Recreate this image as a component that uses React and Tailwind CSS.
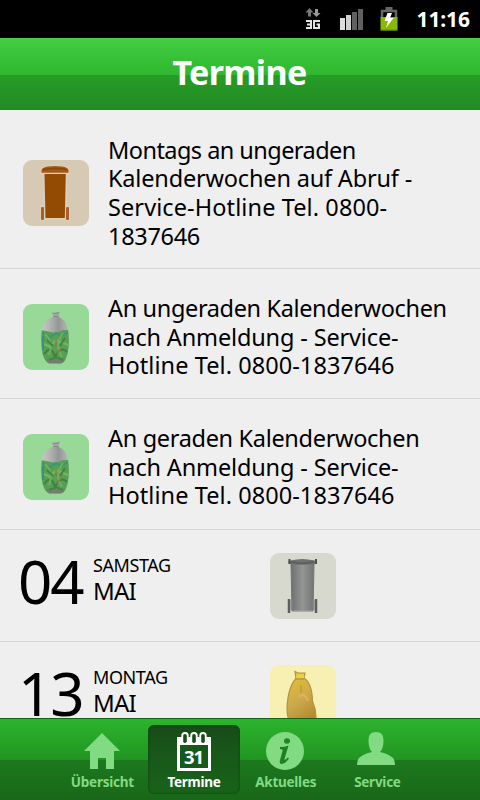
import React from "react";

const notices = [
  {
    bin: "brown",
    size: "h-[159px] pt-2",
    lines: [
      { text: "Montags an ungeraden", spacing: "tracking-[-0.55px]" },
      { text: "Kalenderwochen auf Abruf -", spacing: "tracking-[-0.18px]" },
      { text: "Service-Hotline Tel. 0800-", spacing: "tracking-[0.1px]" },
      { text: "1837646", spacing: "tracking-[-0.3px]" },
    ],
  },
  {
    bin: "glass",
    size: "h-[130px] pt-[7px]",
    lines: [
      { text: "An ungeraden Kalenderwochen", spacing: "tracking-[-0.36px]" },
      { text: "nach Anmeldung - Service-", spacing: "tracking-[-0.15px]" },
      { text: "Hotline Tel. 0800-1837646", spacing: "tracking-[0.07px]" },
    ],
  },
  {
    bin: "glass",
    size: "h-[131px] pt-1.5",
    lines: [
      { text: "An geraden Kalenderwochen", spacing: "tracking-[-0.32px]" },
      { text: "nach Anmeldung - Service-", spacing: "tracking-[-0.15px]" },
      { text: "Hotline Tel. 0800-1837646", spacing: "tracking-[0.07px]" },
    ],
  },
];

const dates = [
  { day: "04", weekday: "SAMSTAG", month: "MAI", bin: "grey" },
  { day: "13", weekday: "MONTAG", month: "MAI", bin: "yellow" },
];

const BrownBin = () => (
  <svg viewBox="0 0 66 66" className="h-full w-full">
    <path
      d="M18 8Q32 3 46 8V14L43.500 15V46H46.500V60.500H43V59H21V60.500H17.500V46H21V15L18 14Z"
      fill="#e0cfb6"
      stroke="#e0cfb6"
      strokeWidth="1"
    />
    <path d="M18.500 10Q19 7.500 25 6.500Q32 5.500 39 6.500Q45 7.500 45.500 10V12.800H18.500Z" fill="#a1581c" />
    <path d="M20 9.500Q32 7.500 44 9.500" stroke="#8c4504" strokeWidth="1.500" fill="none" />
    <path d="M21.500 14H42.800L41.800 58H22.500Z" fill="#934a03" />
    <rect x="18" y="47" width="3" height="13" rx="1" fill="#a4622a" />
    <rect x="43" y="47" width="3" height="13" rx="1" fill="#a4622a" />
  </svg>
);

const GreyBin = () => (
  <svg viewBox="0 0 66 66" className="h-full w-full">
    <defs>
      <linearGradient id="greyBody" x1="0" x2="1" y1="0" y2="0">
        <stop offset="0" stopColor="#6e706f" />
        <stop offset=".5" stopColor="#949695" />
        <stop offset="1" stopColor="#737574" />
      </linearGradient>
    </defs>
    <path d="M21 11H44L43 58H22Z" fill="url(#greyBody)" stroke="#737574" />
    <path d="M23 58H42.500" stroke="#b0b1ac" strokeWidth="1" />
    <path d="M18.500 7.500H21Q32 4.500 44 7.500H46.500V11H18.500Z" fill="#707271" />
    <path d="M21 8.500Q32 12.500 44 8.500" stroke="#5d5f5e" strokeWidth="2" fill="none" />
    <path d="M19.500 6V11M46 6V11" stroke="#4d4f4e" strokeWidth="2" />
    <path d="M19 46V60M46 46V60" stroke="#5d5f5e" strokeWidth="2.500" />
    <path d="M21.500 47V57M43.500 47V57" stroke="#858786" strokeWidth="2" />
  </svg>
);

const GlassBag = () => (
  <svg viewBox="0 0 66 66" className="h-full w-full">
    <defs>
      <linearGradient id="bagTop" x1="0" x2="1" y1="0" y2="0">
        <stop offset="0" stopColor="#c8cdc8" />
        <stop offset=".3" stopColor="#b2b6b3" />
        <stop offset=".6" stopColor="#939695" />
        <stop offset="1" stopColor="#c0c5c0" />
      </linearGradient>
      <clipPath id="bagClip">
        <path d="M29 13H36Q43 16 45 25Q47 40 44.500 50Q42 59 38 59.500H26Q22 58 19.500 50Q17 37 19 25Q21 16 29 13Z" />
      </clipPath>
      <filter id="bagSoft">
        <feGaussianBlur stdDeviation=".6" />
      </filter>
    </defs>
    <path d="M28.500 8L31 9L37 7.500L35.500 12V14H30V11.500Z" fill="#a0a6a1" />
    <path d="M30 9.500L36 8.800M30.500 12.500H35.500" stroke="#838985" strokeWidth="1" />
    <g clipPath="url(#bagClip)">
      <path d="M17 12H48V62H17Z" fill="url(#bagTop)" />
      <g filter="url(#bagSoft)">
        <path d="M14 25L23 27L33 29L40 26L50 26V56H14Z" fill="#57a055" />
        <path d="M14 55H50V64H14Z" fill="#71816d" />
        <g fill="none" strokeWidth="2">
          <path d="M19 29L27 33L33 29L38 32L45 28" stroke="#3b9770" />
          <path d="M19 39L27 43L33 36L45 41" stroke="#7eb35d" />
          <path d="M21 50Q28 40 32 53Q38 41 44 48" stroke="#3f8140" />
          <path d="M22 30Q31 38 26 51M40 29Q31 41 39 53" stroke="#71af60" />
          <path d="M20 32V46" stroke="#3b9278" />
          <path d="M24 36L30 42M42 34L37 42" stroke="#3d8741" />
          <path d="M33 35V43M38 44L34 50" stroke="#8c7b4c" strokeWidth="1.500" />
          <path d="M26 56L33 53L40 56" stroke="#4a8247" />
        </g>
      </g>
    </g>
  </svg>
);

const YellowBag = () => (
  <svg viewBox="0 0 66 66" className="h-full w-full">
    <defs>
      <linearGradient id="sack" x1="0" x2=".35" y1="0" y2="1">
        <stop offset="0" stopColor="#e3c642" />
        <stop offset=".4" stopColor="#d7b243" />
        <stop offset=".6" stopColor="#cda84e" />
        <stop offset="1" stopColor="#b58b2d" />
      </linearGradient>
    </defs>
    <path
      d="M25 6.500L28 8H35L34 13Q42 18 42.500 36Q46 44 46 52Q44 63 35 62H25Q17 59 17 43Q18 22 26 13.500Z"
      fill="url(#sack)"
      stroke="#ae963d"
      strokeWidth="1.200"
    />
    <path d="M27 9H34V13H26Z" fill="#ead047" />
    <path d="M26 14H34M31 20V28" stroke="#b89930" strokeWidth="1.300" />
    <path d="M29 32Q34 26 38 36" stroke="#dfbd66" strokeWidth="3" fill="none" opacity=".5" />
  </svg>
);

const tiles = {
  brown: { icon: BrownBin, background: "bg-[#d6cab4]" },
  grey: { icon: GreyBin, background: "bg-[#d7d8ce]" },
  glass: { icon: GlassBag, background: "bg-[#99d998]" },
  yellow: { icon: YellowBag, background: "bg-[#f8efb3]" },
};

const BinTile = ({ type }) => {
  const { icon: Icon, background } = tiles[type];
  return (
    <div className={`h-[66px] w-[66px] shrink-0 overflow-hidden rounded-[9px] ${background}`}>
      <Icon />
    </div>
  );
};

const StatusBar = () => (
  <div className="flex h-[38px] shrink-0 items-center bg-black pl-[304px] text-white">
    <svg width="18" height="24" viewBox="0 0 18 24" className="shrink-0">
      <path d="M5.500 1L9.500 5.500H7V9.500H4V5.500H1.500Z" fill="#777" />
      <path d="M11 2H14V6H16.500L12.500 10L8.500 6H11Z" fill="#999" />
      <path
        d="M2 14H7V21H2M3 17.500H7M16 14H10V21H15V17.500H12.500"
        fill="none"
        stroke="#e4e4e4"
        strokeWidth="2"
      />
    </svg>
    <svg width="24" height="22" viewBox="0 0 24 22" className="ml-[17px] shrink-0">
      <rect x="1" y="10" width="5" height="12" fill="#dedede" />
      <rect x="7" y="7" width="5" height="15" fill="#cfcfcf" />
      <rect x="13" y="4" width="5" height="18" fill="#606060" />
      <rect x="19" y="1" width="5" height="21" fill="#606060" />
    </svg>
    <svg width="18" height="24" viewBox="0 0 18 24" className="ml-[17px] shrink-0">
      <path d="M2 11V4H16V11" fill="none" stroke="#666" strokeWidth="2.500" />
      <rect x="5.500" y="0" width="7" height="4" fill="#666" />
      <rect x="0.500" y="10" width="17" height="13.500" fill="#8aba00" />
      <path d="M1 23H17" stroke="#638600" />
      <path d="M7.500 6H12L10 11H13.500L6 21L8 14H4.500Z" fill="#fff" />
    </svg>
    <span className="ml-[18.500px] text-[21px] leading-none font-bold tracking-[-0.1px] whitespace-nowrap">
      11:16
    </span>
  </div>
);

const NoticeRow = ({ notice }) => (
  <div className={`flex shrink-0 items-center border-b border-[#d3d6d3] pl-[23px] ${notice.size}`}>
    <BinTile type={notice.bin} />
    <div className="ml-[19px] text-[23.500px] leading-[28.600px]">
      {notice.lines.map((line) => (
        <p key={line.text} className={`whitespace-nowrap ${line.spacing}`}>
          {line.text}
        </p>
      ))}
    </div>
  </div>
);

const DateRow = ({ date }) => (
  <div className="flex h-[112px] shrink-0 items-center border-b border-[#d3d6d3] pt-px pl-[18px]">
    <div className="w-[75px] pb-[11px] text-[60px] leading-[70px] tracking-[-2px]">{date.day}</div>
    <div className="w-[177px] self-start pt-[22px]">
      <p className="text-[18px] leading-[25px] tracking-[-0.400px]">{date.weekday}</p>
      <p className="text-[24px] leading-[25px] tracking-[-0.800px]">{date.month}</p>
    </div>
    <BinTile type={date.bin} />
  </div>
);

const HomeIcon = () => (
  <svg width="38" height="38" viewBox="0 0 38 38" fill="#82da82">
    <path d="M19 1L37 19H31V37H23V26H15V37H7V19H1Z" />
  </svg>
);

const CalendarIcon = () => (
  <svg width="38" height="40" viewBox="0 0 38 40" className="mr-px">
    <path d="M2 5H36V39H2Z" fill="#fff" />
    <rect x="5" y="13" width="28" height="23" fill="#17591a" />
    {[10, 19, 28].map((x) => (
      <g key={x}>
        <rect x={x - 3.7} y="0" width="7.4" height="12" rx="3.5" fill="#fff" />
        <rect x={x - 1.8} y="2" width="3.6" height="9" rx="1.8" fill="#174c18" />
      </g>
    ))}
    <text
      x="18.500"
      y="32"
      textAnchor="middle"
      fill="#fff"
      fontFamily="Noto Sans, sans-serif"
      fontSize="18.500"
      fontWeight="700"
      letterSpacing="-1"
    >
      31
    </text>
  </svg>
);

const InfoIcon = () => (
  <svg width="38" height="38" viewBox="0 0 38 38" className="mr-px">
    <circle cx="19" cy="19" r="19" fill="#82da82" />
    <ellipse cx="21" cy="9" rx="3" ry="2.700" fill="#208622" />
    <path
      d="M14 15Q19 15 22.500 13.500L18.500 27Q18 29 22 25.500L23 26.500Q19 32 15.500 32Q13 32 14 28L16.500 19Q17 17 14 17Z"
      fill="#208022"
    />
  </svg>
);

const PersonIcon = () => (
  <svg width="38" height="34" viewBox="0 0 38 34" fill="#82da82" className="mr-[3px]">
    <path d="M11.500 9C11.500 3 13.500 0 19 0S26.500 3 26.500 9C26.500 14 25 18 23 20Q31 21.500 36 26Q38 28 38 33H0Q0 28 2 26Q7 21.500 15 20C13 18 11.500 14 11.500 9Z" />
  </svg>
);

const tabs = [
  { label: "Übersicht", icon: HomeIcon },
  { label: "Termine", icon: CalendarIcon, active: true },
  { label: "Aktuelles", icon: InfoIcon },
  { label: "Service", icon: PersonIcon },
];

const TabBar = () => (
  <nav className="flex h-[82px] shrink-0 border-t border-[#12631a] bg-[linear-gradient(#2db42d_0%,#219522_50%,#1c791d_51%,#196719_100%)] pt-1.5 pl-[56.500px]">
    {tabs.map((tab) => {
      const Icon = tab.icon;
      return (
        <button
          key={tab.label}
          className={`flex h-[69px] w-[91.700px] flex-col items-center rounded-[6px] ${
            tab.active
              ? "bg-[linear-gradient(#174b18_0%,#185619_35%,#19631a_100%)] text-white shadow-[inset_0_0_3px_#0e430f]"
              : "text-[#82da82]"
          }`}
        >
          <span className="flex h-[48px] items-start pt-[7px]">
            <Icon />
          </span>
          <span className="text-[13.500px] leading-[18px] font-bold tracking-[-0.25px] whitespace-nowrap">
            {tab.label}
          </span>
        </button>
      );
    })}
  </nav>
);

const App = () => {
  return (
    <div className="flex h-[800px] w-[480px] flex-col overflow-hidden bg-[#efefef] font-['Noto_Sans',sans-serif] text-black">
      <StatusBar />
      <header className="flex h-[72px] shrink-0 items-center justify-center bg-[linear-gradient(#43ce43_0%,#2fb72f_51%,#269c27_52%,#238b24_100%)] pr-px pb-1">
        <h1 className="text-[34px] leading-none font-bold tracking-[-0.600px] text-white">Termine</h1>
      </header>
      <main className="flex min-h-0 flex-1 flex-col overflow-hidden">
        {notices.map((notice, index) => (
          <NoticeRow key={index} notice={notice} />
        ))}
        {dates.map((date) => (
          <DateRow key={date.day} date={date} />
        ))}
      </main>
      <TabBar />
    </div>
  );
};

export default App;
